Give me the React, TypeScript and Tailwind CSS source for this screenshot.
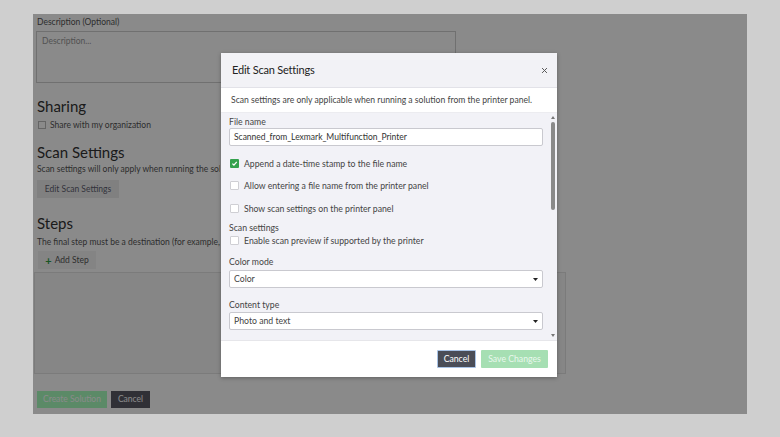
import React from "react";

const font = { fontFamily: "Lato, 'Open Sans', sans-serif" };

function Check({ checked }: { checked?: boolean }) {
  if (checked) {
    return (
      <span className="flex h-[9px] w-[9px] shrink-0 items-center justify-center rounded-[1px] bg-[#35a24e]">
        <svg width="7" height="7" viewBox="0 0 10 10">
          <path d="M2 5.2 L4.2 7.4 L8.2 2.8" stroke="#fff" strokeWidth="1.8" fill="none" />
        </svg>
      </span>
    );
  }
  return <span className="block h-[9px] w-[9px] shrink-0 rounded-[1px] border border-[#cfcfd4] bg-white" />;
}

function Row({ label, checked }: { label: string; checked?: boolean }) {
  return (
    <div className="flex h-[18px] items-center gap-[5px] pl-[1px]">
      <Check checked={checked} />
      <span className="whitespace-nowrap text-[8.7px] leading-[11px] text-[#444]">{label}</span>
    </div>
  );
}

function Select({ value }: { value: string }) {
  return (
    <div className="flex h-[18px] items-center justify-between rounded-[2px] border border-[#c9c9cf] bg-white pl-[4px] pr-[4px]">
      <span className="text-[8.7px] text-[#444]">{value}</span>
      <svg width="5" height="3" viewBox="0 0 5 3">
        <path d="M0 0 L5 0 L2.5 3 Z" fill="#222" />
      </svg>
    </div>
  );
}

export default function App() {
  return (
    <div className="h-[437px] w-[780px] bg-[#cfcfcf] pl-[33px] pt-[14px]" style={font}>
      <div className="relative h-[400px] w-[714px] overflow-hidden bg-white">
        {/* page content */}
        <div className="flex flex-col px-[3px] pt-[3px]">
          <div className="pl-[1px] text-[8.5px] leading-[11px] text-[#555]">Description (Optional)</div>
          <div className="mt-[3px] h-[52px] w-[420px] border border-[#cfcfcf] bg-white px-[5px] pt-[4px] text-[8.5px] leading-[11px] text-[#999]">
            Description...
          </div>
          <div className="mt-[15px] pl-[1px] text-[15px] leading-[16px] text-[#333]">Sharing</div>
          <div className="mt-[6px] flex items-center gap-[4px] pl-[2px]">
            <span className="block h-[8px] w-[8px] border border-[#bbb] bg-white" />
            <span className="text-[8.5px] leading-[10px] text-[#555]">Share with my organization</span>
          </div>
          <div className="mt-[14px] pl-[1px] text-[15px] leading-[16px] text-[#333]">Scan Settings</div>
          <div className="mt-[4px] w-[184px] overflow-hidden whitespace-nowrap pl-[1px] text-[8.5px] leading-[10px] text-[#555]">
            Scan settings will only apply when running the solution from the printer panel.
          </div>
          <div className="mt-[6px] ml-[1px] flex h-[18px] w-[82px] items-center justify-center bg-[#ededed] text-[8.5px] text-[#5e5e70]">
            Edit Scan Settings
          </div>
          <div className="mt-[17px] pl-[1px] text-[15px] leading-[16px] text-[#333]">Steps</div>
          <div className="mt-[6px] w-[184px] overflow-hidden whitespace-nowrap pl-[1px] text-[8.5px] leading-[10px] text-[#555]">
            The final step must be a destination (for example, e-mail or a network folder).
          </div>
          <div className="mt-[4px] ml-[2px] flex h-[18px] w-[58px] items-center justify-center gap-[3px] bg-[#f4f4f4] text-[8.5px] text-[#555]">
            <span className="text-[11px] font-bold leading-none text-[#2f9e44]">+</span>
            Add Step
          </div>
          <div className="mt-[3px] ml-[-2px] h-[102px] w-[532px] border border-[#e3e3e3] bg-[#f7f7f7]" />
          <div className="mt-[17px] ml-[1px] flex gap-[4px]">
            <div className="flex h-[17px] w-[70px] items-center justify-center bg-[#a8ffbf] text-[8.5px] text-white">
              Create Solution
            </div>
            <div className="flex h-[17px] w-[39px] items-center justify-center bg-[#595964] text-[8.5px] text-white">
              Cancel
            </div>
          </div>
        </div>

        {/* overlay */}
        <div className="absolute inset-0 bg-[rgba(0,0,0,0.46)]" />

        {/* modal */}
        <div className="absolute left-[188px] top-[39px] flex h-[324px] w-[336px] flex-col bg-white shadow-[0_1px_4px_rgba(0,0,0,0.3)]">
          <div className="flex h-[35px] items-center justify-between border-b border-[#e2e2e8] bg-[#f2f2f6] pl-[11px] pr-[9px]">
            <span className="text-[11px] tracking-[-0.2px] text-[#222]">Edit Scan Settings</span>
            <svg width="7" height="7" viewBox="0 0 10 10">
              <path d="M1.5 1.5 L8.5 8.5 M8.5 1.5 L1.5 8.5" stroke="#555" strokeWidth="1.4" />
            </svg>
          </div>
          <div className="flex h-[24px] items-center whitespace-nowrap pl-[10px] text-[8.6px] text-[#444]">
            Scan settings are only applicable when running a solution from the printer panel.
          </div>
          <div className="flex h-[228px] border-t border-[#ececf0] bg-[#f2f2f7]">
            <div className="flex w-[322px] flex-col pl-[8px] pt-[3px]">
              <div className="text-[8.7px] leading-[11px] text-[#444]">File name</div>
              <div className="mt-[1px] flex h-[18px] w-[314px] items-center rounded-[2px] border border-[#c9c9cf] bg-white pl-[4px] text-[8.5px] text-[#333]">
                Scanned_from_Lexmark_Multifunction_Printer
              </div>
              <div className="mt-[8px] flex flex-col gap-[4.5px]">
                <Row label="Append a date-time stamp to the file name" checked />
                <Row label="Allow entering a file name from the printer panel" />
                <Row label="Show scan settings on the printer panel" />
              </div>
              <div className="mt-[6px] text-[8.7px] leading-[10px] text-[#444]">Scan settings</div>
              <div className="mt-[1px] flex h-[12px] items-center gap-[5px] pl-[1px]">
                <Check />
                <span className="whitespace-nowrap text-[8.7px] leading-[11px] text-[#444]">
                  Enable scan preview if supported by the printer
                </span>
              </div>
              <div className="mt-[10px] text-[8.7px] leading-[11px] text-[#444]">Color mode</div>
              <div className="mt-[3px] w-[314px]">
                <Select value="Color" />
              </div>
              <div className="mt-[11px] text-[8.7px] leading-[11px] text-[#444]">Content type</div>
              <div className="mt-[2px] w-[314px]">
                <Select value="Photo and text" />
              </div>
            </div>
            <div className="ml-[7px] flex w-[6px] flex-col items-center pt-[3px] pb-[3px]">
              <svg width="4" height="3" viewBox="0 0 4 3">
                <path d="M0 3 L4 3 L2 0 Z" fill="#777" />
              </svg>
              <div className="mt-[3px] h-[88px] w-[4px] rounded-[2px] bg-[#8a8a8a]" />
              <div className="flex-1" />
              <svg width="4" height="3" viewBox="0 0 4 3">
                <path d="M0 0 L4 0 L2 3 Z" fill="#777" />
              </svg>
            </div>
          </div>
          <div className="flex flex-1 items-center justify-end gap-[5px] border-t border-[#e6e6ea] pr-[9px]">
            <div className="flex h-[18px] w-[39px] items-center justify-center rounded-[1px] border border-[#a8c3e6] bg-[#4a4d57] text-[8.7px] text-white">
              Cancel
            </div>
            <div className="flex h-[18px] w-[67px] items-center justify-center rounded-[1px] bg-[#a6dfb3] text-[8.7px] text-[#eaf8ee]">
              Save Changes
            </div>
          </div>
        </div>
      </div>
    </div>
  );
}
